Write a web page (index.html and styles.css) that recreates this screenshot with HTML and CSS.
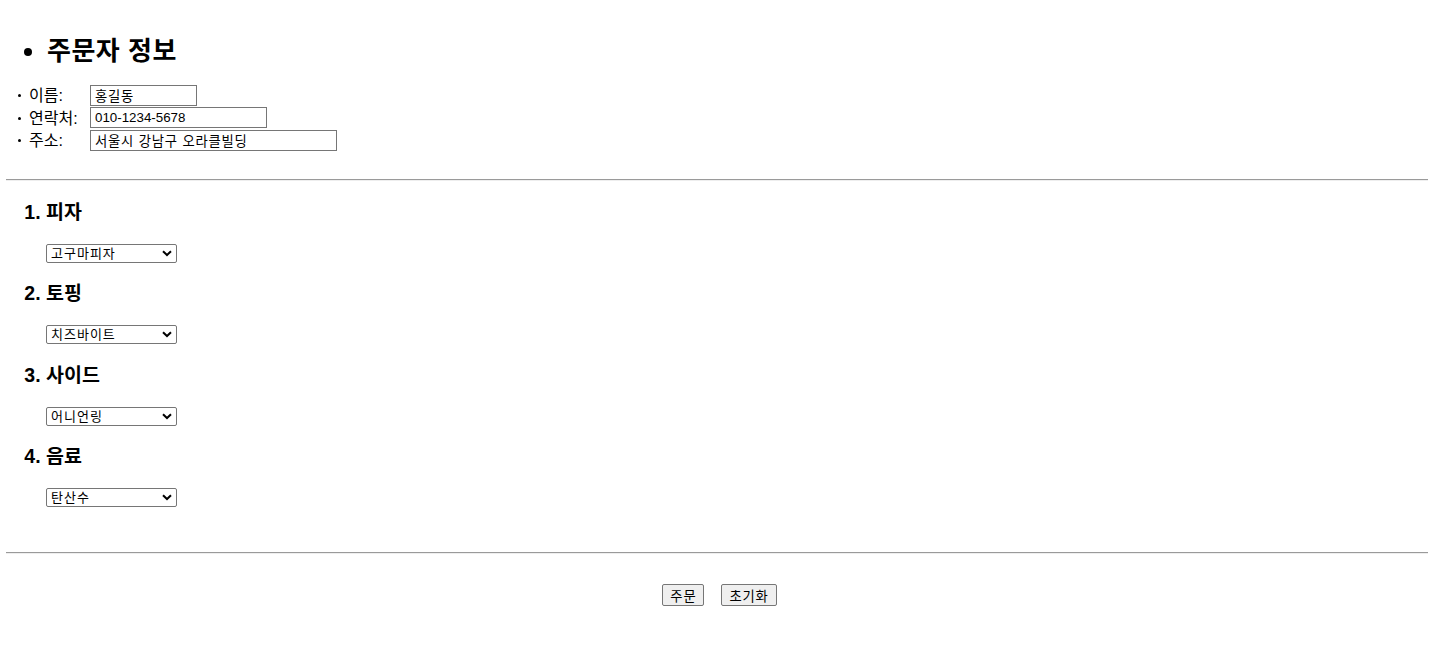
FILE: index.html
```html
<!DOCTYPE html>
<html lang="ko">
<head>
  <meta charset="UTF-8" />
  <meta name="viewport" content="width=device-width, initial-scale=1.0"/>
  <title>피자 주문</title>
  <link rel="stylesheet" href="styles.css">
</head>
<body>

<ul class="title-list">
  <li><h2>주문자 정보</h2></li>
</ul>

<div class="info">
  <div class="row">
    <span class="dot"></span>
    <label for="name">이름:</label>
    <input id="name" class="w-short ko" value="홍길동">
  </div>
  <div class="row">
    <span class="dot"></span>
    <label for="phone">연락처:</label>
    <input id="phone" class="w-mid" value="010-1234-5678">
  </div>
  <div class="row">
    <span class="dot"></span>
    <label for="addr">주소:</label>
    <input id="addr" class="w-long ko" value="서울시 강남구 오라클빌딩">
  </div>
</div>

<hr class="line-top">

<ol class="menu">
  <li>
    <h3>피자</h3>
    <div class="select-box">
      <select>
        <option>고구마피자</option>
        <option>불고기피자</option>
        <option>페퍼로니피자</option>
      </select>
      <svg class="arrow" width="10" height="7" viewBox="0 0 10 7"><path d="M1 1.2 L5 5 L9 1.2" fill="none" stroke="#000" stroke-width="2"/></svg>
    </div>
  </li>
  <li>
    <h3>토핑</h3>
    <div class="select-box">
      <select>
        <option>치즈바이트</option>
        <option>치즈크러스트</option>
      </select>
      <svg class="arrow" width="10" height="7" viewBox="0 0 10 7"><path d="M1 1.2 L5 5 L9 1.2" fill="none" stroke="#000" stroke-width="2"/></svg>
    </div>
  </li>
  <li>
    <h3>사이드</h3>
    <div class="select-box">
      <select>
        <option>어니언링</option>
        <option>치즈스틱</option>
      </select>
      <svg class="arrow" width="10" height="7" viewBox="0 0 10 7"><path d="M1 1.2 L5 5 L9 1.2" fill="none" stroke="#000" stroke-width="2"/></svg>
    </div>
  </li>
  <li>
    <h3>음료</h3>
    <div class="select-box">
      <select>
        <option>탄산수</option>
        <option>콜라</option>
        <option>사이다</option>
      </select>
      <svg class="arrow" width="10" height="7" viewBox="0 0 10 7"><path d="M1 1.2 L5 5 L9 1.2" fill="none" stroke="#000" stroke-width="2"/></svg>
    </div>
  </li>
</ol>

<hr class="line-bottom">

<div class="buttons">
  <button type="button">주문</button>
  <button type="button">초기화</button>
</div>

</body>
</html>
```

FILE: styles.css
```css
body {
  font-family: "Liberation Sans", "Noto Sans CJK KR", sans-serif;
  margin: 0;
  padding: 0 2px 0 6px;
  color: #000;
  background: #fff;
}

/* 주문자 정보 */
.title-list {
  margin: 36px 0 0;
  padding-left: 41px;
  list-style: disc;
  font-size: 26px;
}

.title-list h2 {
  margin: 0;
  font-size: 26px;
  line-height: 30px;
  font-weight: bold;
  letter-spacing: 0.5px;
}

.info {
  margin-top: 18px;
}

.row {
  display: flex;
  align-items: center;
  height: 22.5px;
  font-size: 16px;
}

.dot {
  width: 3px;
  height: 3px;
  border-radius: 50%;
  background: #000;
  margin: 1px 8px 0 12px;
}

.row label {
  width: 61px;
  line-height: 20px;
  padding-top: 2px;
}

.row input {
  box-sizing: border-box;
  height: 21px;
  padding: 1px 4px;
  border: 1px solid #767676;
  font-family: "Liberation Sans", "Noto Sans CJK KR", sans-serif;
  font-size: 13.33px;
  color: #000;
}

.row input.ko {
  letter-spacing: 0.8px;
}

.w-short { width: 107px; }
.w-mid { width: 177px; }
.w-long { width: 247px; }

hr {
  border: none;
  border-top: 1px solid #9a9a9a;
  border-bottom: 1px solid #eee;
  margin: 0;
}

.line-top {
  margin-top: 27px;
}

/* 메뉴 */
.menu {
  margin: 19px 0 45px;
  padding-left: 40px;
  font-size: 19.5px;
  font-weight: bold;
}

.menu li {
  margin-bottom: 18.5px;
}

.menu li:last-child {
  margin-bottom: 0;
}

.menu h3 {
  margin: 0 0 20px;
  font-size: 19.5px;
  line-height: 24px;
}

.select-box {
  position: relative;
  width: 131px;
}

.select-box select {
  appearance: none;
  -webkit-appearance: none;
  display: block;
  box-sizing: border-box;
  width: 131px;
  height: 19px;
  padding: 0 4px;
  border: 1px solid #767676;
  border-radius: 2px;
  background: #fff;
  font-family: "Liberation Sans", "Noto Sans CJK KR", sans-serif;
  font-size: 13px;
  font-weight: normal;
  letter-spacing: 1px;
  line-height: 17px;
  color: #000;
}

.arrow {
  position: absolute;
  right: 5px;
  top: 6px;
  pointer-events: none;
}

/* 버튼 */
.buttons {
  display: flex;
  justify-content: center;
  gap: 17px;
  margin-top: 30px;
  padding-left: 5px;
}

.buttons button {
  height: 22px;
  padding: 0 7px;
  border: 1px solid #767676;
  border-radius: 2px;
  background: #efefef;
  font-family: "Liberation Sans", "Noto Sans CJK KR", sans-serif;
  font-size: 13.33px;
  letter-spacing: 0.8px;
  color: #000;
}
```
